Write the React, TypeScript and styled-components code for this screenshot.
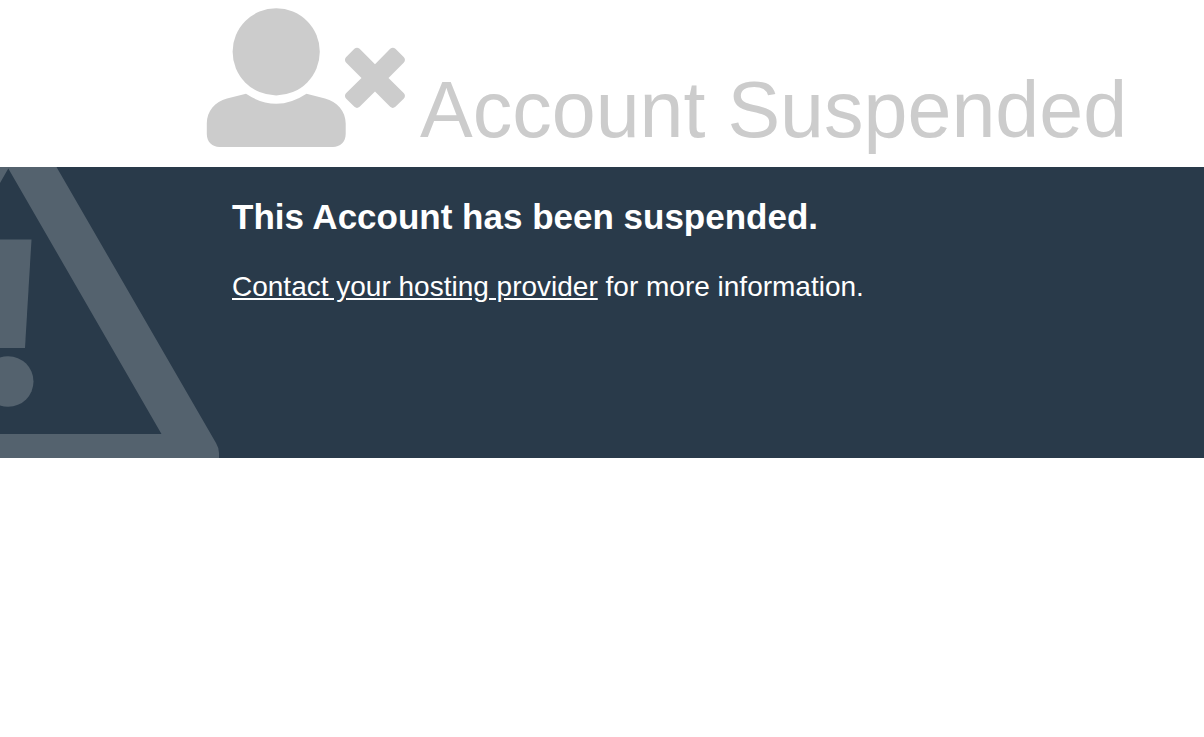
import React from "react";
import styled, { createGlobalStyle } from "styled-components";

const GlobalStyle = createGlobalStyle`
  body {
    margin: 0;
    background: #ffffff;
    color: #2f3230;
    font-family: Arial, "Liberation Sans", sans-serif;
  }
`;

const Header = styled.header`
  display: flex;
  align-items: flex-start;
  gap: 14px;
  padding: 8px 16px 13px 206px;
  color: #cccccc;
`;

const UserIcon = styled.svg`
  flex: none;
  display: block;
  width: 200px;
  height: 139px;
  fill: currentColor;
`;

const Heading = styled.h1`
  margin: 0;
  padding-top: 58px;
  font-size: 79px;
  line-height: 88px;
  font-weight: 400;
  white-space: nowrap;
`;

const Banner = styled.section`
  display: flex;
  align-items: stretch;
  gap: 13px;
  background: #293a4a;
  color: #ffffff;
`;

const WarningIcon = styled.svg`
  flex: none;
  display: block;
  width: 219px;
  height: 291px;
  fill: #54626e;
`;

const Message = styled.div`
  flex: 1;
  padding: 30px 16px 0 0;
`;

const Title = styled.h2`
  margin: 0 0 32px;
  font-size: 35px;
  line-height: 40px;
  font-weight: 700;
`;

const Text = styled.p`
  margin: 0;
  font-size: 28px;
  line-height: 36px;
`;

const ContactLink = styled.a`
  color: inherit;
  text-decoration: underline;
`;

export default function App() {
  return (
    <>
      <GlobalStyle />
      <Header>
        <UserIcon viewBox="206 8 200 139" aria-hidden="true">
          <circle cx="276.2" cy="51.8" r="43.6" />
          <path d="M246 93.8Q276.300 113.800 306.500 93.800L325 98.500C337 101.500 345.700 111 345.700 123.500V134C345.700 142 340 147 333 147H219.500C212.500 147 206.800 142 206.800 134V123.500C206.800 111 215 101.500 227 98.500Z" />
          <path d="M354.400 48.800Q357 46.600 359.600 48.800L375 64.200L390.200 48.800Q392.800 46.600 395.400 48.800L403.900 57.200Q406 59.800 403.900 62.400L388.500 77.900L403.900 93.200Q406 95.800 403.900 98.400L395.400 106.800Q392.800 109 390.200 106.800L375 91.500L359.600 106.800Q357 109 354.400 106.800L346 98.400Q343.900 95.800 346 93.200L361.500 77.900L346 62.400Q343.900 59.800 346 57.200Z" />
        </UserIcon>
        <Heading>Account Suspended</Heading>
      </Header>
      <Banner>
        <WarningIcon viewBox="0 167 219 291" aria-hidden="true">
          <path
            fillRule="evenodd"
            d="M0 167H56.500L216 443Q219 448 219 453V458H0V434H161.500L8.300 168.500L0 183Z"
          />
          <path d="M0 239.500H31.500L25 348H0Z" />
          <circle cx="8.200" cy="381.500" r="25.300" />
        </WarningIcon>
        <Message>
          <Title>This Account has been suspended.</Title>
          <Text>
            <ContactLink href="#contact">Contact your hosting provider</ContactLink> for more
            information.
          </Text>
        </Message>
      </Banner>
    </>
  );
}
